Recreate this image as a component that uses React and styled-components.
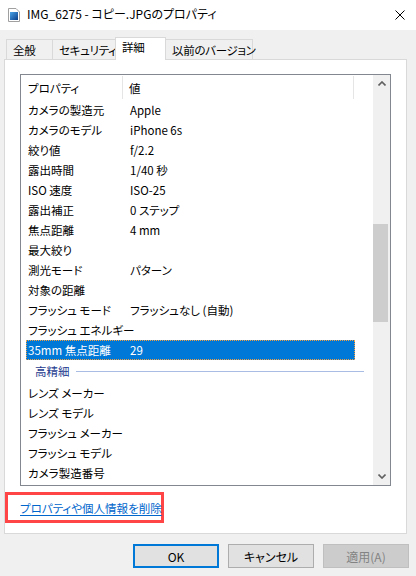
import React from 'react';
import styled, { createGlobalStyle } from 'styled-components';

const GlobalStyle = createGlobalStyle`
  html, body {
    margin: 0;
    padding: 0;
    background: #f0f0f0;
  }
  body {
    font-family: "Noto Sans CJK JP", "Noto Sans", sans-serif;
    font-size: 11.5px;
    font-feature-settings: "palt";
    color: #000;
  }
`;

const Window = styled.div`
  width: 416px;
  height: 576px;
  background: #f0f0f0;
  display: flex;
  flex-direction: column;
  overflow: hidden;
`;

const TitleBar = styled.div`
  height: 30px;
  background: #fff;
  display: flex;
  align-items: center;
  padding: 0 11px 0 8px;
  gap: 7px;
`;

const TitleText = styled.div`
  flex: 1;
  font-size: 12px;
  line-height: 16px;
  margin-top: -2px;
`;

const TabStrip = styled.div`
  display: flex;
  align-items: flex-end;
  height: 23px;
  margin: 7px 0 -1px 6px;
`;

const Tab = styled.div`
  box-sizing: border-box;
  width: ${p => p.width}px;
  height: ${p => (p.active ? 23 : 20)}px;
  margin-bottom: ${p => (p.active ? 0 : 1)}px;
  margin-left: -1px;
  padding: ${p => (p.active ? '2px' : '3px')} 0 0 6px;
  line-height: 14px;
  font-size: 11.5px;
  letter-spacing: -0.3px;
  background: ${p => (p.active ? '#fff' : '#f0f0f0')};
  border: 1px solid #d9d9d9;
  border-bottom: none;
  position: relative;
  z-index: ${p => (p.active ? 1 : 0)};
  white-space: nowrap;
  &:first-child { margin-left: 0; }
`;

const Panel = styled.div`
  box-sizing: border-box;
  margin: 0 9px 0 4px;
  height: 475px;
  background: #fff;
  border: 1px solid #d9d9d9;
  padding-top: 14px;
  display: flex;
  flex-direction: column;
`;

const ListBox = styled.div`
  box-sizing: border-box;
  margin: 0 15px;
  height: 412px;
  border: 1px solid #828790;
  display: flex;
  overflow: hidden;
`;

const ListContent = styled.div`
  flex: 1;
  overflow: hidden;
  display: flex;
  flex-direction: column;
`;

const HeaderRow = styled.div`
  display: flex;
  height: 25px;
  flex-shrink: 0;
`;

const HeaderCell = styled.div`
  box-sizing: border-box;
  width: ${p => p.width}px;
  padding-left: ${p => p.pad}px;
  border-right: 1px solid #e5e5e5;
  margin: 1px 0;
  display: flex;
  align-items: center;
`;

const Row = styled.div`
  box-sizing: border-box;
  display: grid;
  grid-template-columns: 102px 1fr;
  margin-left: 5px;
  width: 329px;
  height: 20px;
  flex-shrink: 0;
  padding-left: 2px;
  align-items: center;
  white-space: nowrap;
  background: ${p => (p.selected ? '#0078d7' : 'transparent')};
  color: ${p => (p.selected ? '#fff' : '#000')};
  outline: ${p => (p.selected ? '1px dotted #f5a040' : 'none')};
  outline-offset: -1px;
`;

const GroupRow = styled.div`
  display: flex;
  align-items: center;
  height: 24px;
  flex-shrink: 0;
  padding-left: 14px;
  margin-top: -1px;
  gap: 6px;
  color: #1e3c8f;
`;

const GroupLine = styled.div`
  width: 288px;
  height: 1px;
  background: #a9bde4;
  margin-top: 1px;
`;

const ScrollBar = styled.div`
  width: 17px;
  background: #f0f0f0;
  display: flex;
  flex-direction: column;
`;

const ScrollButton = styled.div`
  height: 17px;
  display: flex;
  align-items: center;
  justify-content: center;
  flex-shrink: 0;
`;

const ScrollTrack = styled.div`
  flex: 1;
  display: flex;
  flex-direction: column;
`;

const Thumb = styled.div`
  margin: ${p => p.offset}px 2px 0 0;
  height: ${p => p.size}px;
  background: #cdcdcd;
`;

const LinkBox = styled.div`
  box-sizing: border-box;
  width: 159px;
  height: 31px;
  margin-top: 6px;
  border: 3px solid #ff4545;
  padding-left: 12px;
  display: flex;
  align-items: center;
`;

const Link = styled.a`
  color: #0066cc;
  text-decoration: underline;
  text-underline-offset: 2px;
  cursor: pointer;
  white-space: nowrap;
`;

const ButtonRow = styled.div`
  display: flex;
  justify-content: flex-end;
  gap: 9px;
  padding: 10px 7px 0 0;
`;

const Button = styled.div`
  box-sizing: border-box;
  width: 86px;
  height: 24px;
  display: flex;
  align-items: center;
  justify-content: center;
  font-size: 12px;
  background: ${p => (p.disabled ? '#cccccc' : '#e1e1e1')};
  color: ${p => (p.disabled ? '#838383' : '#000')};
  border: ${p => (p.primary ? '2px solid #0078d7' : p.disabled ? '1px solid #bfbfbf' : '1px solid #adadad')};
`;

const FileIcon = () => (
  <svg width="12" height="14" viewBox="0 0 12 14">
    <defs>
      <linearGradient id="pic" x1="0" y1="0" x2="1" y2="1">
        <stop offset="0" stopColor="#4aa3e8" />
        <stop offset="1" stopColor="#0a3f8a" />
      </linearGradient>
    </defs>
    <path d="M0.5 0.5 H8 L11.5 4 V13.5 H0.5 Z" fill="#fff" stroke="#a0a0a0" />
    <rect x="2" y="4" width="8" height="8" fill="url(#pic)" />
  </svg>
);

const CloseIcon = () => (
  <svg width="10" height="10" viewBox="0 0 10 10">
    <path d="M0.5 0.5 L9.5 9.5 M9.5 0.5 L0.5 9.5" stroke="#000" strokeWidth="1" />
  </svg>
);

const Chevron = ({ down }) => (
  <svg width="8" height="5" viewBox="0 0 8 5">
    <path
      d={down ? 'M0.5 0.5 L4 4 L7.5 0.5' : 'M0.5 4.5 L4 1 L7.5 4.5'}
      fill="none"
      stroke="#606060"
      strokeWidth="1.6"
    />
  </svg>
);

const rowsTop = [
  ['カメラの製造元', 'Apple'],
  ['カメラのモデル', 'iPhone 6s'],
  ['絞り値', 'f/2.2'],
  ['露出時間', '1/40 秒'],
  ['ISO 速度', 'ISO-25'],
  ['露出補正', '0 ステップ'],
  ['焦点距離', '4 mm'],
  ['最大絞り', ''],
  ['測光モード', 'パターン'],
  ['対象の距離', ''],
  ['フラッシュ モード', 'フラッシュなし (自動)'],
  ['フラッシュ エネルギー', ''],
  ['35mm 焦点距離', '29', true],
];

const rowsBottom = [
  ['レンズ メーカー', ''],
  ['レンズ モデル', ''],
  ['フラッシュ メーカー', ''],
  ['フラッシュ モデル', ''],
  ['カメラ製造番号', ''],
];

const tabs = [
  { label: '全般', width: 47 },
  { label: 'セキュリティ', width: 64 },
  { label: '詳細', width: 51, active: true },
  { label: '以前のバージョン', width: 88 },
];

export default function App() {
  return (
    <Window>
      <GlobalStyle />
      <TitleBar>
        <FileIcon />
        <TitleText>IMG_6275 - コピー.JPGのプロパティ</TitleText>
        <CloseIcon />
      </TitleBar>

      <TabStrip>
        {tabs.map(t => (
          <Tab key={t.label} width={t.width} active={t.active}>{t.label}</Tab>
        ))}
      </TabStrip>

      <Panel>
        <ListBox>
          <ListContent>
            <HeaderRow>
              <HeaderCell width={102} pad={7}>プロパティ</HeaderCell>
              <HeaderCell width={231} pad={6}>値</HeaderCell>
            </HeaderRow>
            {rowsTop.map(([k, v, sel]) => (
              <Row key={k} selected={sel}>
                <span>{k}</span>
                <span>{v}</span>
              </Row>
            ))}
            <GroupRow>
              <span>高精細</span>
              <GroupLine />
            </GroupRow>
            {rowsBottom.map(([k, v]) => (
              <Row key={k}>
                <span>{k}</span>
                <span>{v}</span>
              </Row>
            ))}
          </ListContent>
          <ScrollBar>
            <ScrollButton><Chevron /></ScrollButton>
            <ScrollTrack>
              <Thumb offset={132} size={98} />
            </ScrollTrack>
            <ScrollButton><Chevron down /></ScrollButton>
          </ScrollBar>
        </ListBox>

        <LinkBox>
          <Link>プロパティや個人情報を削除</Link>
        </LinkBox>
      </Panel>

      <ButtonRow>
        <Button primary>OK</Button>
        <Button>キャンセル</Button>
        <Button disabled>適用(A)</Button>
      </ButtonRow>
    </Window>
  );
}
